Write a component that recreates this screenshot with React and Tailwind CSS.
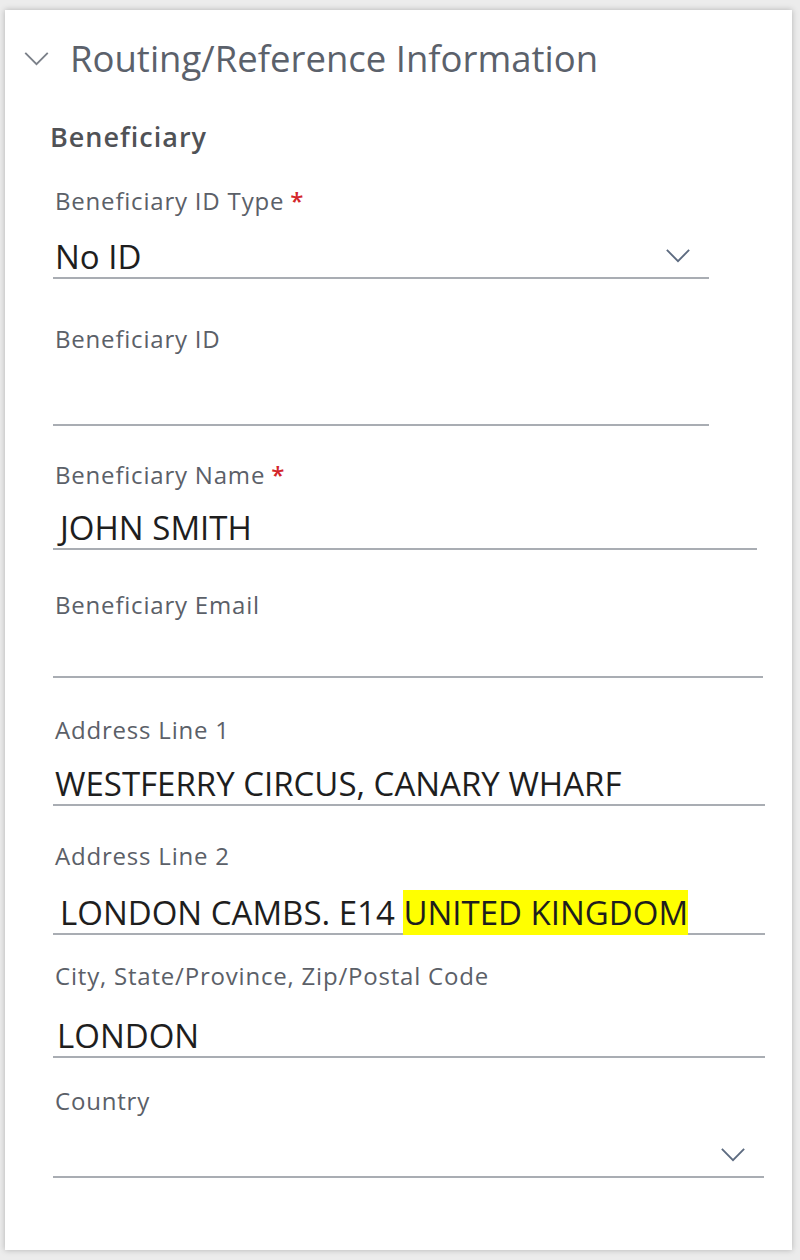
import React from "react";

const FONT = { fontFamily: '"Open Sans", "Noto Sans", sans-serif' };

function Chevron({ className }) {
  return (
    <svg viewBox="0 0 28 16" className={className} fill="none" stroke="currentColor" strokeWidth="2">
      <polyline points="2,2 14,14 26,2" />
    </svg>
  );
}

function Label({ text, required }) {
  return (
    <div className="h-[30px] pl-[2px] text-[24px] tracking-[0.8px] leading-[30px] text-[#5b6068] whitespace-nowrap">
      {text}
      {required && <span className="ml-[6px] text-[#d3262b] font-semibold">*</span>}
    </div>
  );
}

// one underlined field: label, gap, value row
function Field({ label, required, value, mt, gap = "mt-0", width, pad = "pl-[2px]", height = "h-[42px]", select, highlight }) {
  return (
    <div className={mt}>
      <Label text={label} required={required} />
      <div className={`${gap} ${width} ${height} flex items-center justify-between border-b-2 border-[#a9adb3]`}>
        <div className={`${pad} text-[33px] leading-[40px] text-[#1e1e1e] whitespace-nowrap`}>
          {value}
          {highlight && <span className="bg-[#ffff00]">{highlight}</span>}
        </div>
        {select && <Chevron className="self-end mb-[14px] mr-[18px] w-[26px] h-[15px] text-[#5d6b80]" />}
      </div>
    </div>
  );
}

export default function App() {
  return (
    <div className="w-[800px] h-[1260px] bg-[#ececec] pt-[10px] pl-[5px] pr-[8px]" style={FONT}>
      <div className="h-[1240px] bg-white shadow-[0_0_6px_rgba(0,0,0,0.25)]">
        {/* Header */}
        <div className="h-[96px] flex items-center pl-[18px] gap-[20px]">
          <Chevron className="w-[27px] h-[15px] text-[#7b8089]" />
          <h1 className="text-[36.5px] text-[#5b616b] leading-none">Routing/Reference Information</h1>
        </div>

        <div className="pl-[48px]">
          <h2 className="-ml-[3px] mt-[13px] h-[36px] text-[27px] tracking-[1px] leading-[36px] font-semibold text-[#505256]">
            Beneficiary
          </h2>

          <Field label="Beneficiary ID Type" required value="No ID" mt="mt-[31px]" gap="mt-[21px]" width="w-[656px]" select />
          <Field label="Beneficiary ID" value="" mt="mt-[45px]" width="w-[656px]" height="h-[72px]" />
          <Field label="Beneficiary Name" required value="JOHN SMITH" mt="mt-[34px]" gap="mt-[18px]" width="w-[704px]" pad="pl-[7px]" />
          <Field label="Beneficiary Email" value="" mt="mt-[40px]" width="w-[710px]" height="h-[58px]" />
          <Field label="Address Line 1" value="WESTFERRY CIRCUS, CANARY WHARF" mt="mt-[37px]" gap="mt-[19px]" width="w-[712px]" />
          <Field label="Address Line 2" value="LONDON CAMBS. E14 " highlight="UNITED KINGDOM" mt="mt-[35px]" gap="mt-[22px]" width="w-[712px]" pad="pl-[7px]" />
          <Field label="City, State/Province, Zip/Postal Code" value="LONDON" mt="mt-[26px]" gap="mt-[25px]" width="w-[712px]" pad="pl-[4px]" />
          <Field label="Country" value="" mt="mt-[28px]" width="w-[711px]" height="h-[62px]" select />
        </div>
      </div>
    </div>
  );
}
